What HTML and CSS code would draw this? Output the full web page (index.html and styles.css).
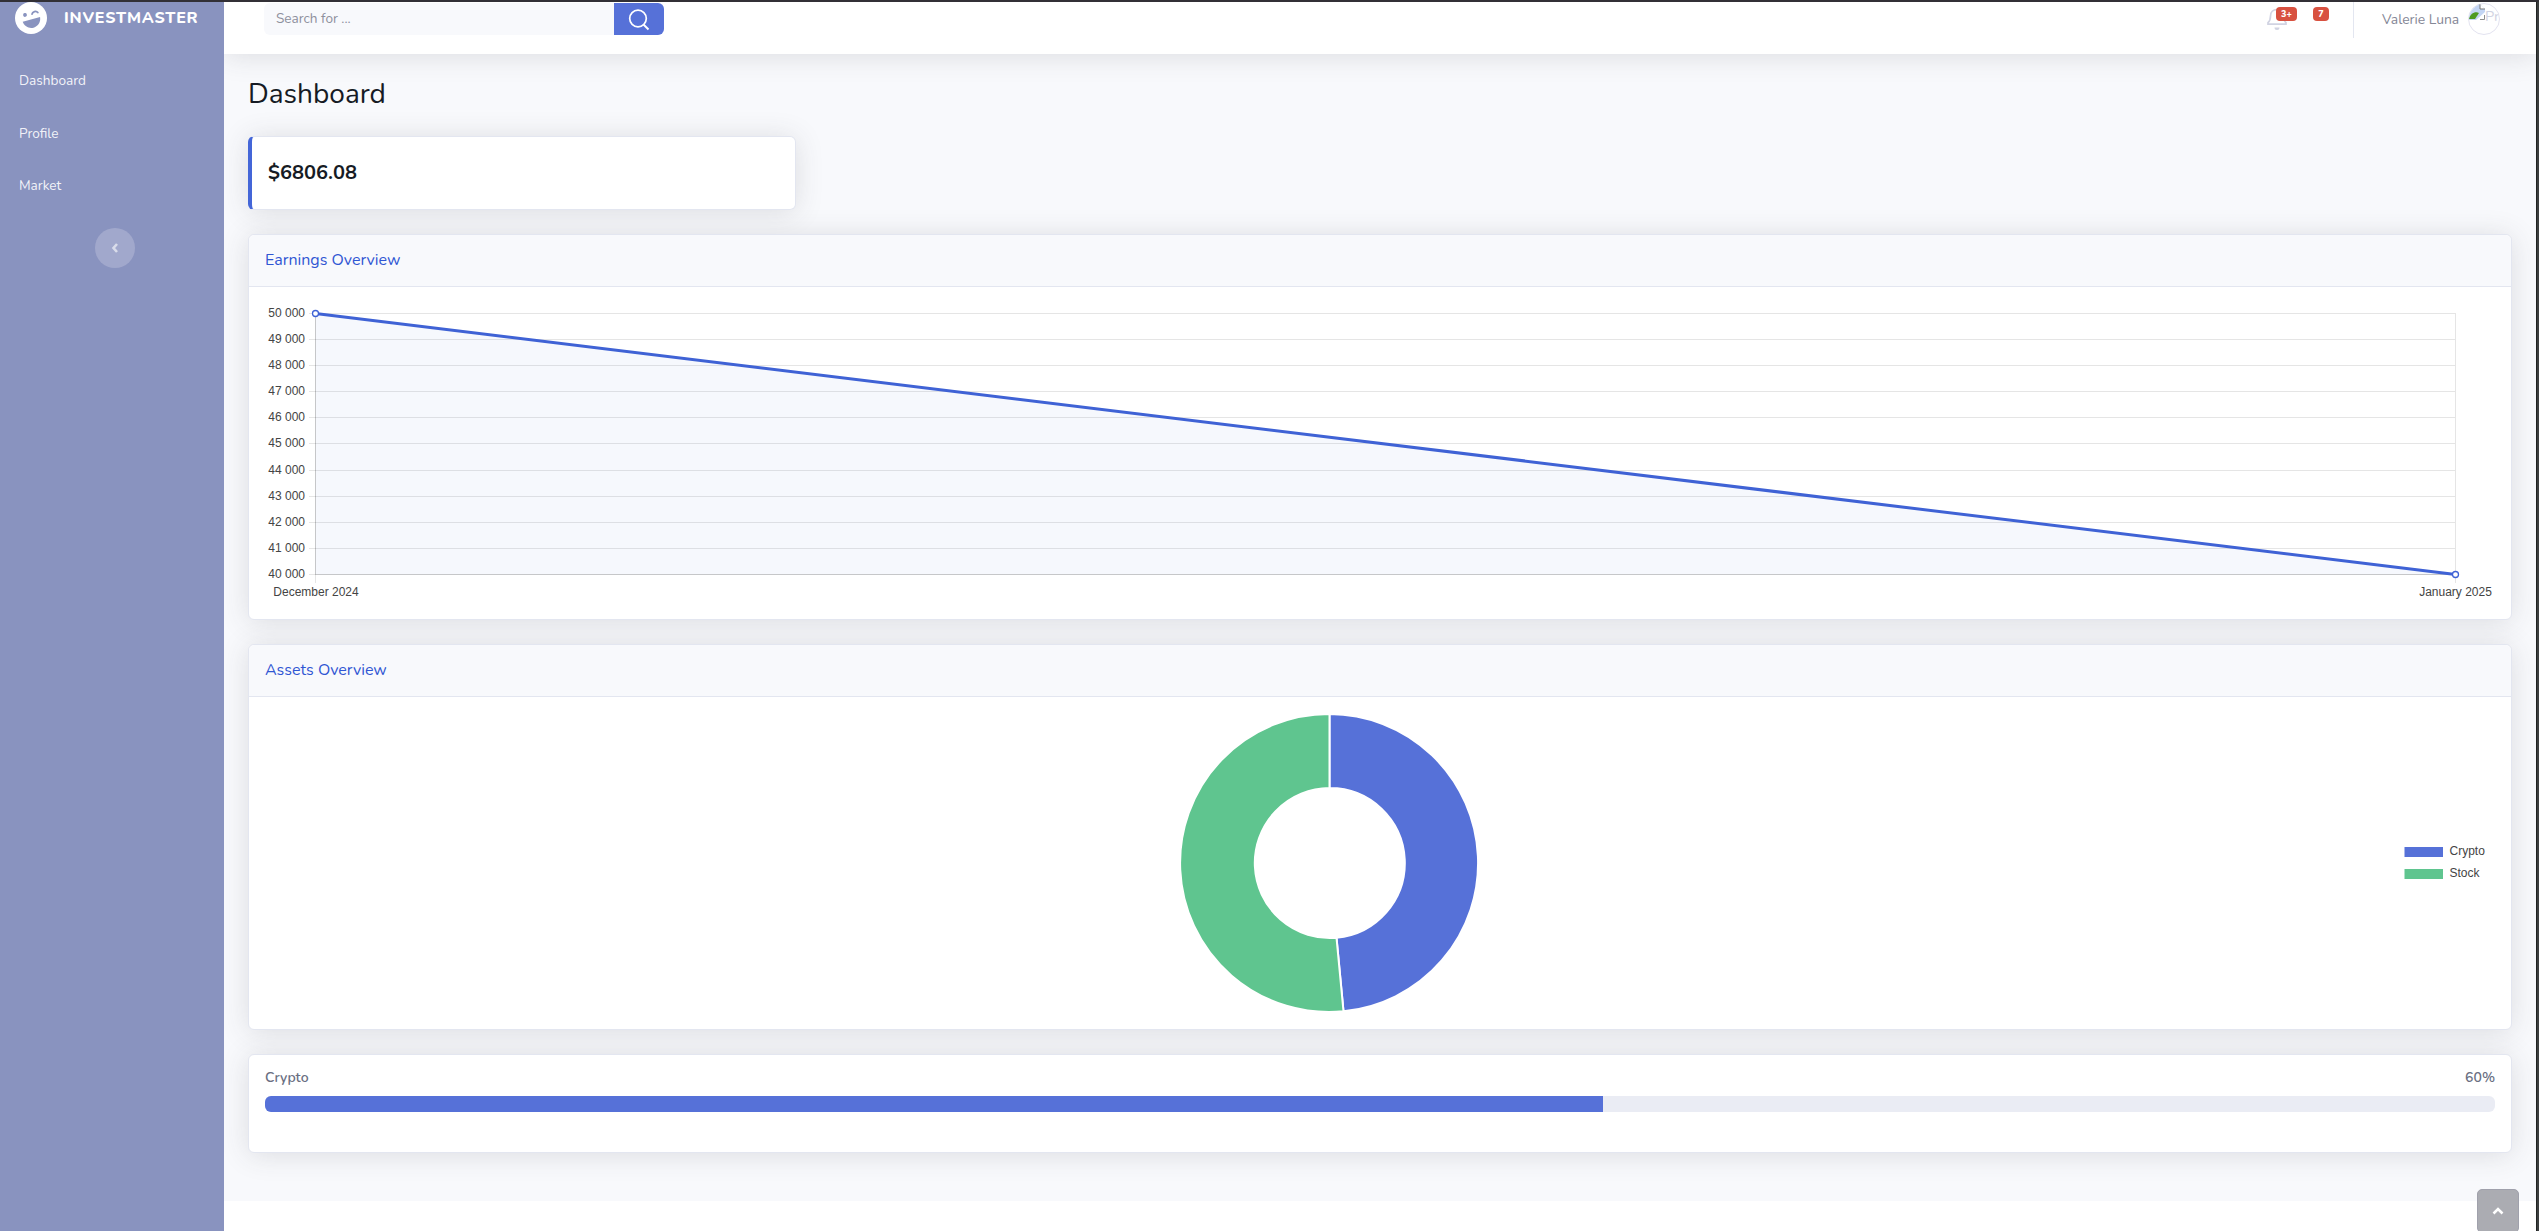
FILE: index.html
```html
<!DOCTYPE html>
<html lang="en">
<head>
<meta charset="utf-8">
<title>InvestMaster - Dashboard</title>
<link rel="stylesheet" href="styles.css">
</head>
<body>
<div class="app">
  <nav class="sidebar">
    <a class="brand">
      <svg class="brand-icon" viewBox="0 0 32 32"><circle cx="16" cy="16" r="16" fill="#fff"/><g transform="rotate(-15 16 16)"><path d="M7 17.500h18c-.6 5.200-4.300 8.500-9 8.500s-8.400-3.300-9-8.500z" fill="#8993bf"/><circle cx="11" cy="11.500" r="1.900" fill="#8993bf"/><path d="M18 12.500c1-2.500 5-2.500 6 0" fill="none" stroke="#8993bf" stroke-width="1.800" stroke-linecap="round"/></g></svg>
      <span class="brand-name">INVESTMASTER</span>
    </a>
    <ul class="menu"><li>Dashboard</li><li>Profile</li><li>Market</li></ul>
    <button class="toggle"><svg viewBox="0 0 10 12"><path d="M7 2 3.500 6 7 10" fill="none" stroke="#d9dcea" stroke-width="2.600"/></svg></button>
  </nav>
  <div class="page">
    <header class="topbar">
      <div class="search"><span class="search-input">Search for ...</span><button class="search-btn"><svg viewBox="0 0 22 22"><circle cx="10" cy="9.500" r="8.300" fill="none" stroke="#fff" stroke-width="1.700"/><path d="m15.500 15.500 5 5" stroke="#fff" stroke-width="1.900"/></svg></button></div>
      <div class="tools">
        <div class="alerts"><svg class="bell" viewBox="0 0 20 22"><path d="M1 16.200v-1.600c2-1.600 2.500-3.500 2.500-6.600C3.500 4.300 6 1.700 10 1.700S16.500 4.300 16.500 8c0 3.100.5 5 2.500 6.600v1.600z" fill="none" stroke="#d1d3e2" stroke-width="1.700"/><path d="M7.500 19.500h5a2.500 2.500 0 0 1-5 0z" fill="#d1d3e2"/></svg><span class="badge badge-bell">3+</span></div>
        <span class="badge">7</span>
        <span class="divider"></span>
        <span class="user">Valerie Luna</span>
        <span class="avatar"><svg viewBox="0 0 16 16"><path d="M0 0h11l5 5v11H0z" fill="#c3d5f4"/><path d="M11 0v5h5" fill="#fff" stroke="#777" stroke-width="1"/><path d="M0 15c1-5 6-8 10-6l-4 6z" fill="#4e9a22"/><path d="M7 16 16 8v8z" fill="#fff"/><path d="M11 15.500h4.500V11M11 .5H0" fill="none" stroke="#8f8f8f"/></svg>Pr</span>
      </div>
    </header>
    <main class="content">
      <h1>Dashboard</h1>
      <section class="card balance">$6806.08</section>
      <section class="card earnings">
        <h2>Earnings Overview</h2>
        <svg class="line-chart" viewBox="0 0 2262 332">
          <path class="grid" d="M60 26.500H2206M60 52.500H2206M60 78.500H2206M60 104.500H2206M60 130.500H2206M60 156.500H2206M60 183.500H2206M60 209.500H2206M60 235.500H2206M60 261.500H2206M60 287.500H2206M66.500 26V296M2206.500 26V296"/>
          <path class="axis" d="M66.500 26V287.500H2206"/>
          <path class="area" d="M66.500 26.500 2206.500 287.500H66.500z"/>
          <path class="line" d="M66.500 26.500 2206.500 287.500"/>
          <circle class="point" cx="66.500" cy="26.500" r="3"/><circle class="point" cx="2206.500" cy="287.500" r="3"/>
          <g class="ticks ticks-y"><text x="56" y="30">50 000</text><text x="56" y="56">49 000</text><text x="56" y="82">48 000</text><text x="56" y="108">47 000</text><text x="56" y="134">46 000</text><text x="56" y="160">45 000</text><text x="56" y="187">44 000</text><text x="56" y="213">43 000</text><text x="56" y="239">42 000</text><text x="56" y="265">41 000</text><text x="56" y="291">40 000</text></g>
          <g class="ticks ticks-x"><text x="67" y="309">December 2024</text><text x="2206.500" y="309">January 2025</text></g>
        </svg>
      </section>
      <section class="card assets">
        <h2>Assets Overview</h2>
        <svg class="donut" viewBox="0 0 2262 332">
          <g class="slices"><path fill="#5671d8" d="M1080.500 17A149 149 0 0 1 1094.500 314.300L1087.500 240.700A75 75 0 0 0 1080.500 91z"/><path fill="#5fc58f" d="M1080.500 17A149 149 0 1 0 1094.500 314.300L1087.500 240.700A75 75 0 1 1 1080.500 91z"/></g>
          <rect x="2155.500" y="150" width="38.500" height="10" fill="#5671d8"/><rect x="2155.500" y="172" width="38.500" height="10" fill="#5fc58f"/>
          <g class="ticks"><text x="2200.500" y="158">Crypto</text><text x="2200.500" y="180">Stock</text></g>
        </svg>
      </section>
      <section class="card progress-card">
        <div class="progress-head"><span>Crypto</span><span>60%</span></div>
        <div class="progress"><div class="bar" style="width:60%"></div></div>
      </section>
    </main>
    <a class="to-top"><svg viewBox="0 0 12 8"><path d="m1.500 6.500 4.500-4.500 4.500 4.500" fill="none" stroke="#fff" stroke-width="2.600"/></svg></a>
  </div>
  <div class="scrollbar"></div>
</div>
</body>
</html>
```
FILE: styles.css
```css
* { box-sizing: border-box; }
body { margin: 0; font-family: Nunito, "Open Sans", "Noto Sans", sans-serif; color: #858796; background: #fff; }
button { border: 0; padding: 0; font: inherit; }
.app { display: flex; height: 1231px; overflow: hidden; border-top: 2px solid #323036; }
.sidebar { width: 224px; flex: none; background: #8993bf; color: rgba(255,255,255,.9); display: flex; flex-direction: column; position: relative; z-index: 1; }
.brand { display: flex; align-items: center; height: 32px; padding: 0 0 0 15px; gap: 17px; }
.brand-icon { width: 32px; height: 32px; }
.brand-name { font-size: 16px; font-weight: 800; letter-spacing: .8px; color: #fff; line-height: 32px; }
.menu { list-style: none; margin: 21px 0 0; padding: 0; }
.menu li { height: 52.500px; line-height: 52.500px; padding-left: 19px; font-size: 13.600px; }
.toggle { width: 40px; height: 40px; flex: none; margin: 15.500px 0 0 95px; border-radius: 50%; background: #a1a8cc; display: flex; align-items: center; justify-content: center; }
.toggle svg { width: 10px; height: 12px; }
.page { flex: 1; min-width: 0; position: relative; }
.topbar { height: 52px; background: #fff; box-shadow: 0 2px 28px rgba(58,59,69,.15); position: relative; display: flex; justify-content: space-between; align-items: flex-start; padding: 0 36px 0 40px; }
.search { display: flex; height: 32px; margin-top: 1px; width: 400px; }
.search-input { flex: 1; background: #f8f9fc; border-radius: 6px 0 0 6px; padding-left: 12px; font-size: 13.600px; line-height: 31px; color: #8e909d; }
.search-btn { width: 50px; background: #5671d8; border-radius: 0 6px 6px 0; display: flex; align-items: center; justify-content: center; }
.search-btn svg { width: 22px; height: 22px; margin-top: 2px; }
.tools { display: flex; align-items: flex-start; }
.alerts { position: relative; width: 46px; height: 32px; }
.bell { width: 20px; height: 22px; margin-top: 6px; display: block; }
.badge { background: #d85140; color: #fff; font-size: 9px; font-weight: 800; border-radius: 4px; height: 14px; line-height: 14px; width: 16px; margin-top: 5px; text-align: center; }
.badge-bell { position: absolute; left: 9px; top: 0; width: 21px; }
.divider { width: 1px; height: 36px; background: #e3e6f0; margin-left: 24px; }
.user { margin-left: 28px; font-size: 13.900px; line-height: 35px; width: 86px; white-space: nowrap; }
.avatar { width: 32px; height: 32px; border: 1px solid #e3e3f0; border-radius: 50%; overflow: hidden; display: flex; margin-top: 1px; font-size: 14.500px; line-height: 24px; color: #d1d3e2; }
.avatar svg { width: 16px; height: 16px; flex: none; }
.content { background: #f8f9fc; height: 1147px; padding: 21px 24px 0; }
h1 { margin: 0 0 23px; font-size: 28px; line-height: 38px; height: 38px; font-weight: 400; color: #161b24; }
.card { background: #fff; border: 1px solid #e3e6f0; border-radius: 6px; box-shadow: 0 2px 28px rgba(58,59,69,.15); margin-top: 24px; }
.balance { width: 548px; height: 74px; margin-top: 0; border-left: 4px solid #4466d8; padding-left: 16px; line-height: 71px; font-size: 20px; font-weight: 700; color: #161b24; }
.earnings, .assets { height: 386px; }
h2 { margin: 0; height: 52px; line-height: 50px; padding-left: 16px; font-size: 16px; font-weight: 400; color: #3056d3; background: #f8f9fc; border-bottom: 1px solid #e3e6f0; border-radius: 6px 6px 0 0; }
.line-chart, .donut { display: block; width: 2262px; height: 332px; }
.grid { stroke: rgba(0,0,0,.1); fill: none; }
.axis { stroke: rgba(0,0,0,.12); fill: none; }
.area { fill: rgba(78,115,223,.05); }
.line { stroke: #3f62d5; stroke-width: 3; fill: none; }
.point { fill: #fff; stroke: #3f62d5; stroke-width: 1.300; }
.ticks { font: 12px "Liberation Sans", sans-serif; fill: #444; }
.ticks-y { text-anchor: end; }
.ticks-x { text-anchor: middle; }
.slices { stroke: #fff; stroke-width: 2; }
.progress-card { height: 99px; padding: 14px 16px; font-size: 14px; font-weight: 600; }
.progress-head { display: flex; justify-content: space-between; line-height: 18px; height: 27px; color: #6a6f82; }
.progress { height: 16px; background: #eaecf4; border-radius: 6px; overflow: hidden; }
.bar { height: 100%; background: #5671d8; }
.to-top { position: absolute; right: 17px; top: 1187px; width: 42px; height: 44px; background: #abacb2; border: 1px solid #a0a1ac; border-radius: 5px; display: flex; align-items: center; justify-content: center; }
.to-top svg { width: 12px; height: 8px; }
.scrollbar { width: 3px; flex: none; background: #3b3e3e; border-left: 1px solid #202322; }
```
